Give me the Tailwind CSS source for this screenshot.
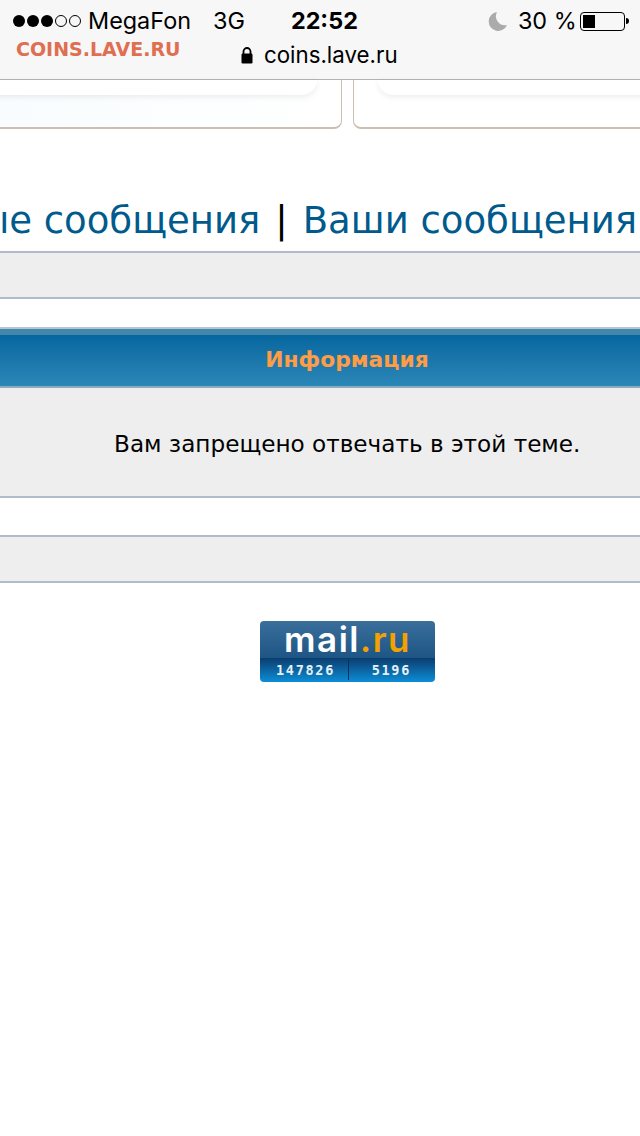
<!DOCTYPE html>
<html lang="ru">
<head>
  <meta charset="UTF-8" />
  <title>coins.lave.ru</title>
  <script src="https://cdn.jsdelivr.net/npm/@tailwindcss/browser@4"></script>
</head>
<body class="bg-white w-[640px] h-[1136px] overflow-hidden font-['DejaVu_Sans',sans-serif] relative">

  <!-- Status bar + address -->
  <div class="h-[80px] bg-[#f7f7f7] border-b border-[#b3b3b3] font-['Inter',sans-serif] text-black">
    <div class="h-[42px] relative flex items-center pl-[13px] text-[23.4px]">
      <div class="flex items-center gap-[2px]">
        <span class="w-[12px] h-[12px] rounded-full bg-black"></span>
        <span class="w-[12px] h-[12px] rounded-full bg-black"></span>
        <span class="w-[12px] h-[12px] rounded-full bg-black"></span>
        <span class="w-[12px] h-[12px] rounded-full border border-black"></span>
        <span class="w-[12px] h-[12px] rounded-full border border-black"></span>
      </div>
      <span class="ml-[7px] w-[125px]">MegaFon</span>
      <span class="">3G</span>
      <span class="ml-[46px] font-bold">22:52</span>
      <svg class="ml-[130px]" width="20" height="20" viewBox="0 0 20 20"><path d="M9 1 A9.5 9.5 0 1 0 19 14 A9 9 0 0 1 9 1 Z" fill="#ababab"/></svg>
      <span class="ml-[10px]">30 %</span>
      <div class="ml-[3px] w-[45px] h-[19px] border border-black rounded-[4px] p-[2px] flex">
        <div class="w-[12px] bg-black"></div>
      </div>
      <div class="w-[3px] h-[6px] bg-black rounded-r-full ml-[1px]"></div>
    </div>
    <div class="flex items-center pl-[241px] h-[26px] text-[22.3px]">
      <svg width="12" height="17" viewBox="0 0 12 17"><path d="M2.5 7 V4.5 A3.5 3.5 0 0 1 9.5 4.5 V7" fill="none" stroke="black" stroke-width="1.8"/><rect x="0.5" y="6.5" width="11" height="10" rx="1.2" fill="black"/></svg>
      <span class="ml-[11px]">coins.lave.ru</span>
    </div>
  </div>
  <div class="absolute left-[16px] top-[38px] text-[19px] leading-[22px] font-bold text-[#e06e50]">COINS.LAVE.RU</div>

  <!-- Cut off cards under the header -->
  <div class="h-[49px] flex gap-[11px]">
    <div class="w-[362px] ml-[-20px] shrink-0 border-r border-b-2 border-[#cbbfb2] rounded-br-[8px] pr-[24px] bg-linear-to-r from-[#f8fcfe] to-white">
      <div class="h-[15px] bg-white rounded-br-[16px] shadow-[0_2px_6px_rgba(0,0,0,0.08)]"></div>
    </div>
    <div class="flex-1 border-l border-b-2 border-[#cbbfb2] rounded-bl-[8px] pl-[24px] mr-[-20px]">
      <div class="h-[15px] bg-white rounded-bl-[16px] shadow-[0_2px_6px_rgba(0,0,0,0.08)]"></div>
    </div>
  </div>

  <!-- Navigation heading -->
  <div class="mt-[67px] h-[50px] flex justify-end whitespace-nowrap pr-[3px] text-[37px] leading-[50px] text-[#005a8c]">
    <a href="#">Новые сообщения</a>
    <span class="text-black mx-[15px]">|</span>
    <a href="#">Ваши сообщения</a>
  </div>

  <div class="mt-[5px] h-[48px] bg-[#eeeeee] border-y-2 border-[#b0bccb]"></div>

  <!-- Information panel -->
  <div class="mt-[28px] h-[61px] border-t-2 border-[#b9c4cf] border-b-2 border-b-[#8fa9bd]">
    <div class="h-[6px] bg-[#4386ab]"></div>
    <div class="h-[51px] bg-linear-to-b from-[#05679f] to-[#2b87b7] flex items-center justify-center pl-[54px]">
      <span class="text-[21.8px] font-bold text-[#ff9c45]">Информация</span>
    </div>
  </div>
  <div class="h-[110px] bg-[#eeeeee] border-b-2 border-[#b0bccb] pl-[114px] pt-[41px]">
    <p class="text-[23.15px] leading-[30px] text-black whitespace-nowrap">Вам запрещено отвечать в этой теме.</p>
  </div>

  <div class="mt-[37px] h-[48px] bg-[#eeeeee] border-y-2 border-[#b0bccb]"></div>

  <!-- mail.ru counter -->
  <div class="mt-[38px] ml-[260px] w-[175px] h-[61px] flex flex-col">
    <div class="h-[37px] rounded-t-[4px] bg-linear-to-b from-[#3a6f9c] to-[#1d5584] flex items-center justify-center">
      <span class="font-['Inter',sans-serif] font-semibold text-[35px] leading-[37px] text-white tracking-[1.5px]">mail<span class="text-[#f2a100]">.ru</span></span>
    </div>
    <div class="h-[24px] rounded-b-[4px] bg-linear-to-b from-[#0a3d6e] to-[#0a8fd8] flex items-center font-['DejaVu_Sans_Mono',monospace] font-bold text-[13.5px] tracking-[1.7px] text-[#e6f0f6]">
      <span class="w-[88px] text-right pr-[13px]">147826</span>
      <span class="w-px h-[20px] bg-[#06305a]"></span>
      <span class="flex-1 text-right pr-[24px]">5196</span>
    </div>
  </div>
</body>
</html>
